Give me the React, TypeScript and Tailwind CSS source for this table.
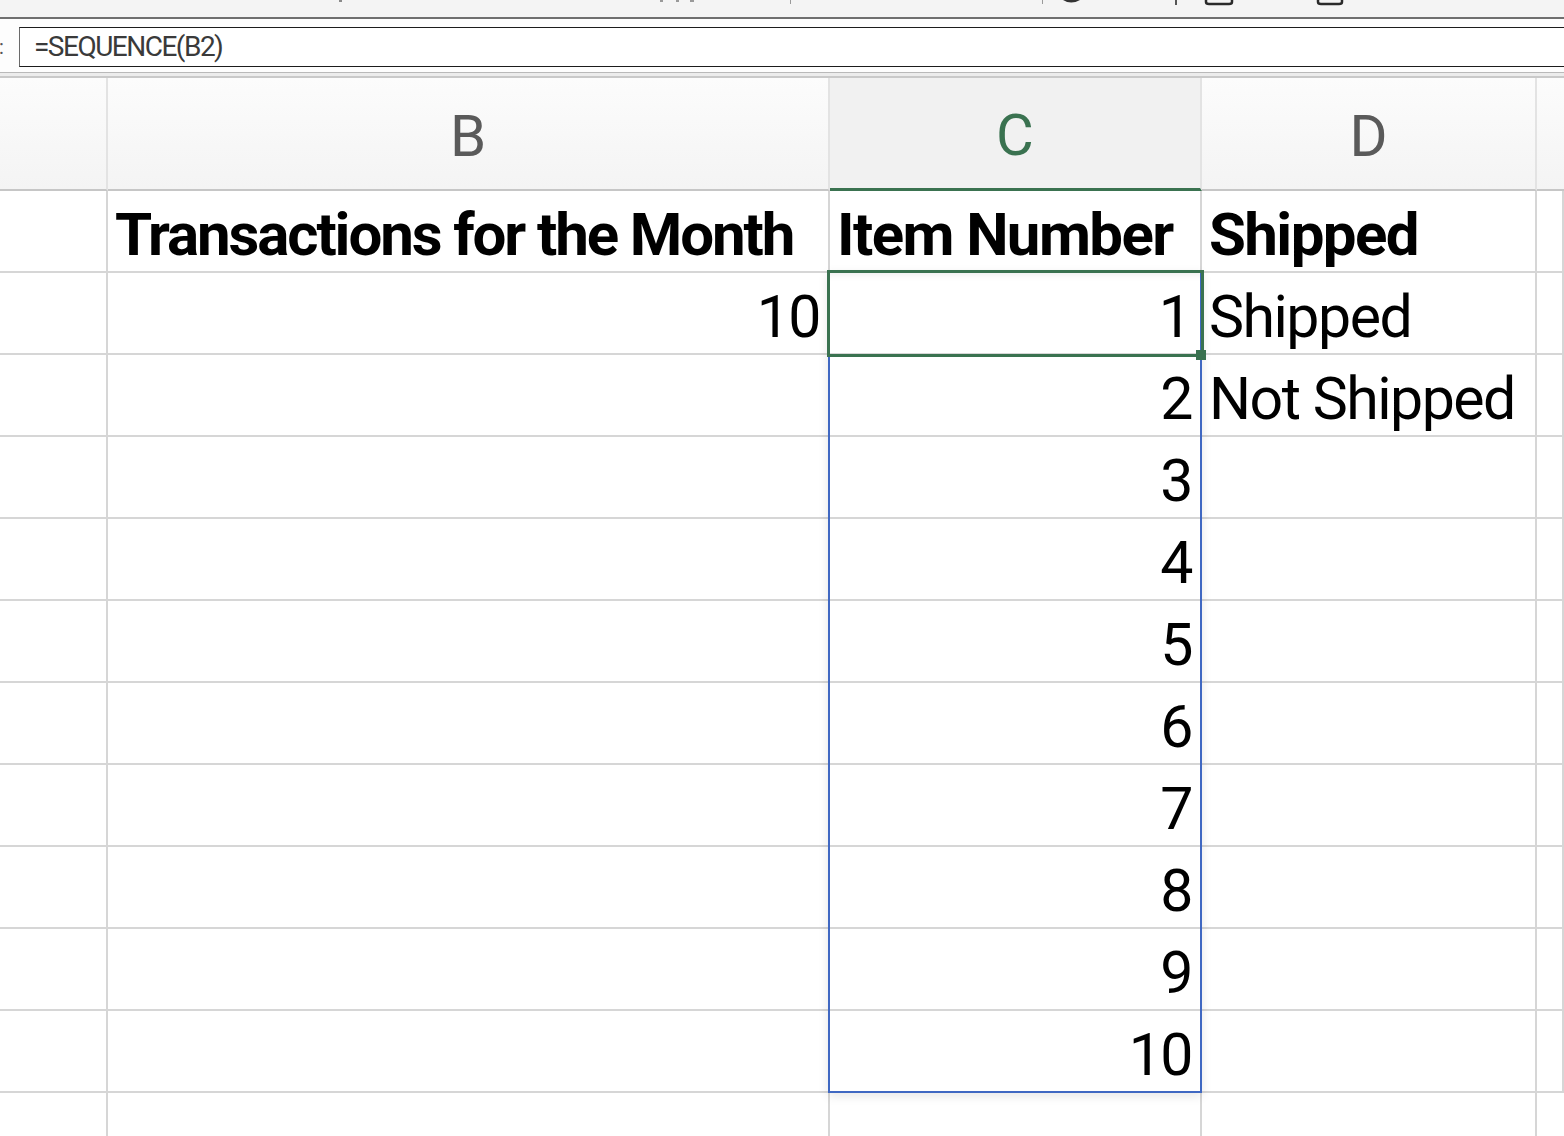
import React from "react";

const BORDER = "border-r-2 border-b-2 border-[#d6d6d6]";

function Cell({
  children,
  align = "left",
  bold = false,
  tight = false,
}: {
  children?: React.ReactNode;
  align?: "left" | "right";
  bold?: boolean;
  tight?: boolean;
}) {
  return (
    <div
      className={`${BORDER} bg-white flex items-end pb-[6px] overflow-visible whitespace-nowrap ${
        align === "right" ? "justify-end pr-[8px]" : "justify-start pl-[7px]"
      }`}
    >
      {children !== undefined && (
        <span
          className={`leading-[60px] text-black ${
            bold
              ? tight
                ? "font-bold text-[60px] tracking-[-2.1px]"
                : "font-bold text-[60px] tracking-[-1.6px]"
              : "font-normal text-[59px] tracking-[-1.5px]"
          }`}
        >
          {children}
        </span>
      )}
    </div>
  );
}

function HeaderCell({
  label,
  active = false,
  last = false,
}: {
  label?: string;
  active?: boolean;
  last?: boolean;
}) {
  return (
    <div
      className={`flex items-center justify-center pt-[4px] ${
        last ? "" : "border-r-2 border-[#e3e3e3]"
      } ${
        active
          ? "bg-[#f1f1f1] border-b-[3px] border-b-[#3a7250]"
          : "bg-gradient-to-b from-[#fcfcfc] to-[#f4f4f4] border-b-2 border-b-[#c6c6c6]"
      }`}
    >
      {label && (
        <span
          className={`text-[58px] leading-none font-normal ${
            active ? "text-[#3a7250]" : "text-[#5a5a5a]"
          }`}
        >
          {label}
        </span>
      )}
    </div>
  );
}

export default function App() {
  const numbers = [2, 3, 4, 5, 6, 7, 8, 9, 10];
  const dCol: Record<number, string> = { 2: "Not Shipped" };

  return (
    <div className="w-[1564px] h-[1136px] overflow-hidden bg-white font-['Roboto',sans-serif]">
      {/* cut-off toolbar strip */}
      <div className="h-[17px] bg-[#f4f4f4]">
        <svg width="1564" height="17" viewBox="0 0 1564 17">
          <rect x="339" y="0" width="3" height="2" fill="#8a8a8a" />
          <rect x="660" y="0" width="3" height="2" fill="#9a9a9a" />
          <rect x="676" y="0" width="3" height="2" fill="#9a9a9a" />
          <rect x="690" y="0" width="4" height="2" fill="#9a9a9a" />
          <rect x="790" y="0" width="1" height="4" fill="#9a9a9a" />
          <rect x="1042" y="0" width="1" height="4" fill="#9a9a9a" />
          <path d="M1063 0 Q1071 5 1080 0 Z" fill="#333" />
          <rect x="1175" y="0" width="2" height="5" fill="#555" />
          <path
            d="M1206 0 V2 Q1206 4 1209 4 H1229 Q1232 4 1232 2 V0"
            fill="none"
            stroke="#2a2a2a"
            strokeWidth="2.5"
          />
          <path
            d="M1318 0 V2 Q1318 4 1321 4 H1339 Q1342 4 1342 2 V0"
            fill="none"
            stroke="#2a2a2a"
            strokeWidth="2.5"
          />
        </svg>
      </div>
      <div className="h-[2px] bg-[#6f6f6f]" />

      {/* formula bar */}
      <div className="h-[53px] bg-[#fdfdfd] flex items-start pt-[8px]">
        <div className="w-[19px] h-[40px] flex items-center">
          <span className="-ml-[1px] text-[20px] leading-none text-[#555]">:</span>
        </div>
        <div className="flex-1 h-[40px] border-t border-b border-l border-t-[#1c1c1c] border-b-[#1c1c1c] border-l-[#6a6a6a] bg-white flex items-center pl-[14px]">
          <span className="text-[28px] leading-none tracking-[-1.5px] text-[#3a3a3a]">
            =SEQUENCE(B2)
          </span>
        </div>
      </div>
      <div className="h-[6px] border-t border-t-[#b9b9b9] border-b-2 border-b-[#c9c9c9] bg-[#ececec]" />

      {/* grid */}
      <div className="grid grid-cols-[108px_722px_372px_335px_1fr] grid-rows-[113px_repeat(11,82px)_1fr] h-[1058px]">
        {/* header row */}
        <HeaderCell />
        <HeaderCell label="B" />
        <HeaderCell label="C" active />
        <HeaderCell label="D" />
        <HeaderCell last />

        {/* row 1 */}
        <Cell />
        <Cell bold tight>
          Transactions for the Month
        </Cell>
        <Cell bold>Item Number</Cell>
        <Cell bold>Shipped</Cell>
        <Cell />

        {/* row 2 */}
        <Cell />
        <Cell align="right">10</Cell>
        <div className={`${BORDER} bg-white relative z-10 flex items-end justify-end pr-[8px] pb-[6px]`}>
          <span className="leading-[60px] text-[59px] text-black">1</span>
          {/* spill range outline */}
          <div className="absolute left-[-2px] top-[-2px] w-[374px] h-[822px] border-2 border-[#3f68c2] shadow-[0_3px_10px_rgba(0,0,0,0.10)] pointer-events-none" />
          {/* active cell */}
          <div className="absolute left-[-3px] top-[-3px] w-[377px] h-[87px] border-[3px] border-[#3a7250] shadow-[inset_0_8px_8px_-8px_rgba(0,0,0,0.10)] pointer-events-none" />
          <div className="absolute left-[366px] top-[77px] w-[10px] h-[10px] bg-[#3a7250]" />
        </div>
        <Cell>Shipped</Cell>
        <Cell />

        {/* rows 3-11 */}
        {numbers.map((n) => (
          <React.Fragment key={n}>
            <Cell />
            <Cell />
            <Cell align="right">{String(n)}</Cell>
            {dCol[n] ? <Cell>{dCol[n]}</Cell> : <Cell />}
            <Cell />
          </React.Fragment>
        ))}

        {/* partial row 12 */}
        <div className="border-r-2 border-[#d6d6d6] bg-white" />
        <div className="border-r-2 border-[#d6d6d6] bg-white" />
        <div className="border-r-2 border-[#d6d6d6] bg-white" />
        <div className="border-r-2 border-[#d6d6d6] bg-white" />
        <div className="bg-white" />
      </div>
    </div>
  );
}
